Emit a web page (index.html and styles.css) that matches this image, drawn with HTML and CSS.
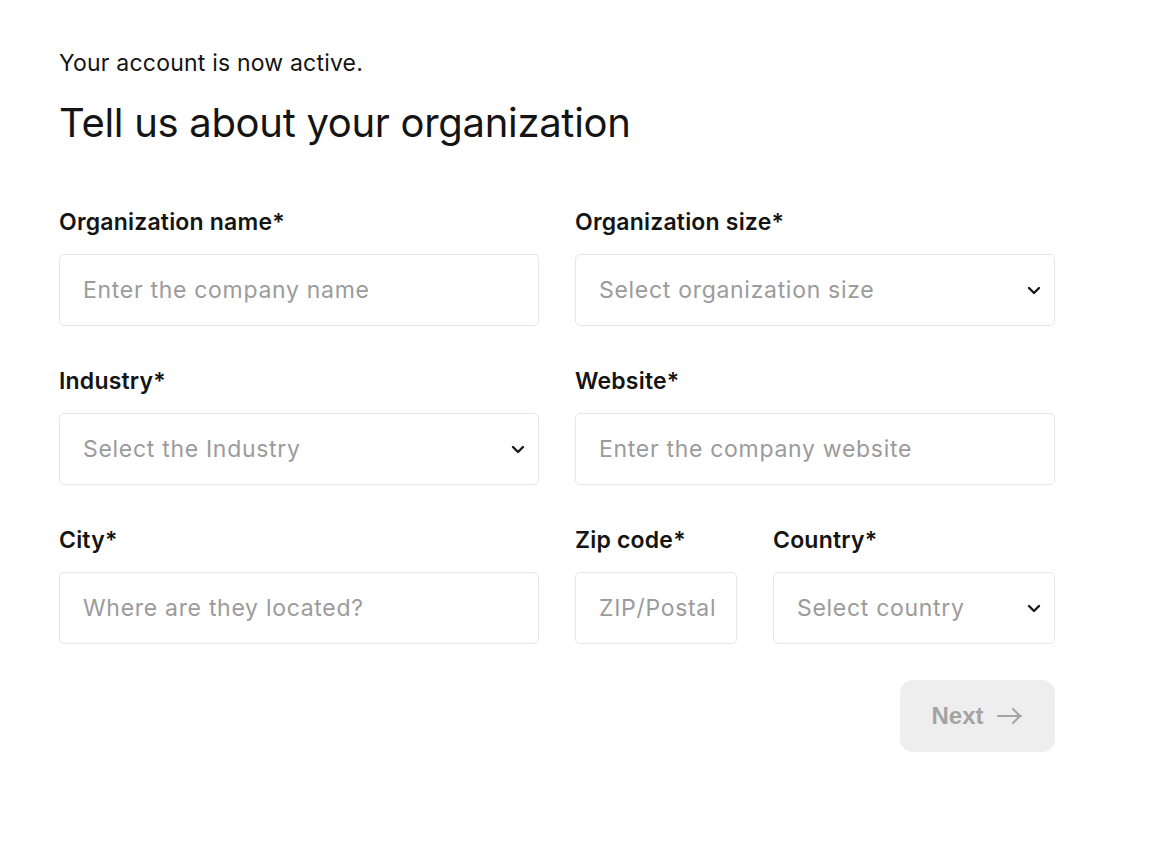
FILE: index.html
```html
<!DOCTYPE html>
<html lang="en">
<head>
<meta charset="utf-8">
<title>Tell us about your organization</title>
<link rel="stylesheet" href="styles.css">
</head>
<body>
<main class="page">
  <p class="status">Your account is now active.</p>
  <h1 class="title">Tell us about your organization</h1>
  <form class="form">
    <div class="field">
      <label class="label">Organization name*</label>
      <div class="control"><span class="placeholder">Enter the company name</span></div>
    </div>
    <div class="field">
      <label class="label">Organization size*</label>
      <div class="control select"><span class="placeholder">Select organization size</span>
        <svg class="chev" width="14" height="9" viewBox="0 0 14 9"><path d="M2 2l5 5 5-5" fill="none" stroke="#1a1a1a" stroke-width="2.4" stroke-linecap="round" stroke-linejoin="round"/></svg>
      </div>
    </div>
    <div class="field">
      <label class="label">Industry*</label>
      <div class="control select"><span class="placeholder">Select the Industry</span>
        <svg class="chev" width="14" height="9" viewBox="0 0 14 9"><path d="M2 2l5 5 5-5" fill="none" stroke="#1a1a1a" stroke-width="2.4" stroke-linecap="round" stroke-linejoin="round"/></svg>
      </div>
    </div>
    <div class="field">
      <label class="label">Website*</label>
      <div class="control"><span class="placeholder">Enter the company website</span></div>
    </div>
    <div class="field">
      <label class="label">City*</label>
      <div class="control"><span class="placeholder">Where are they located?</span></div>
    </div>
    <div class="split">
      <div class="field">
        <label class="label">Zip code*</label>
        <div class="control"><span class="placeholder">ZIP/Postal</span></div>
      </div>
      <div class="field">
        <label class="label">Country*</label>
        <div class="control select"><span class="placeholder">Select country</span>
          <svg class="chev" width="14" height="9" viewBox="0 0 14 9"><path d="M2 2l5 5 5-5" fill="none" stroke="#1a1a1a" stroke-width="2.4" stroke-linecap="round" stroke-linejoin="round"/></svg>
        </div>
      </div>
    </div>
  </form>
  <div class="actions">
    <button class="next" type="button">Next
      <svg width="28" height="18" viewBox="0 0 28 18"><path d="M2 9h23M17 2l7 7-7 7" fill="none" stroke="#a3a3a3" stroke-width="2" stroke-linecap="round" stroke-linejoin="round"/></svg>
    </button>
  </div>
</main>
</body>
</html>
```
FILE: styles.css
```css
html, body {
  margin: 0;
  padding: 0;
  background: #ffffff;
}
body {
  font-family: Inter, "Noto Sans", "Liberation Sans", sans-serif;
  color: #141414;
}
.page {
  width: 996px;
  padding: 49px 0 0 59px;
}
.status {
  margin: 0;
  font-size: 23px;
  line-height: 28px;
  font-weight: 400;
  letter-spacing: 0.2px;
}
.title {
  margin: 22px 0 0 0;
  font-size: 40px;
  line-height: 48px;
  font-weight: 400;
  letter-spacing: -0.3px;
}
.form {
  margin-top: 61px;
  display: grid;
  grid-template-columns: 480px 480px;
  column-gap: 36px;
  row-gap: 41px;
}
.field {
  display: flex;
  flex-direction: column;
  gap: 18px;
}
.label {
  font-size: 23px;
  line-height: 28px;
  font-weight: 600;
  letter-spacing: 0.2px;
  color: #141414;
}
.control {
  box-sizing: border-box;
  height: 72px;
  border: 1px solid #e6e6e6;
  border-radius: 5px;
  padding: 0 23px;
  display: flex;
  align-items: center;
  justify-content: space-between;
}
.select {
  padding-right: 13px;
}
.placeholder {
  font-size: 23px;
  color: #9b9b9b;
  letter-spacing: 0.7px;
  white-space: nowrap;
}
.chev {
  display: block;
}
.split {
  display: grid;
  grid-template-columns: 162px 282px;
  column-gap: 36px;
}
.actions {
  margin-top: 36px;
  display: flex;
  justify-content: flex-end;
}
.next {
  width: 155px;
  height: 72px;
  border: none;
  border-radius: 13px;
  background: #eeeeee;
  color: #a3a3a3;
  font-family: "Liberation Sans", Arial, sans-serif;
  font-size: 24px;
  font-weight: 700;
  display: flex;
  align-items: center;
  justify-content: center;
  gap: 12px;
  padding: 0;
}
.next svg {
  display: block;
}
```
